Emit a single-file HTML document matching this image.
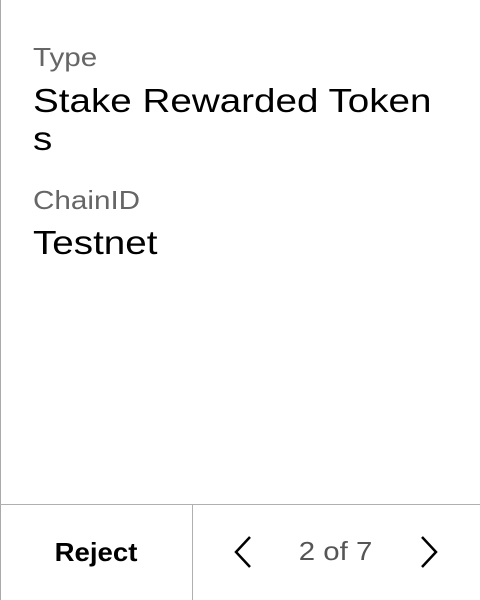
<!DOCTYPE html>
<html><head><meta charset="utf-8"><style>
body{margin:0;width:480px;height:600px;background:#fff;position:relative;overflow:hidden;font-family:"Liberation Sans",sans-serif}
.t{position:absolute;left:33px;white-space:nowrap;line-height:1;transform-origin:0 0}
.l{color:#666;font-size:26px;transform:scaleX(1.14)}
.v{color:#000;font-size:33px;transform:scaleX(1.17)}
</style></head><body>
<div style="position:absolute;left:0;top:0;width:1px;height:600px;background:#aaa"></div>
<div class="t l" style="top:44px">Type</div>
<div class="t v" style="top:84px">Stake Rewarded Token</div>
<div class="t v" style="top:122px">s</div>
<div class="t l" style="top:187px">ChainID</div>
<div class="t v" style="top:226px">Testnet</div>
<div style="position:absolute;left:0;top:504px;width:480px;height:1px;background:#b0b0b0"></div>
<div style="position:absolute;left:192px;top:504px;width:1px;height:96px;background:#b0b0b0"></div>
<div style="position:absolute;left:0;top:505px;width:192px;height:95px;display:flex;align-items:center;justify-content:center;font-weight:bold;font-size:26px;color:#000"><span style="transform:scaleX(1.06);display:inline-block">Reject</span></div>
<svg style="position:absolute;left:230px;top:535px" width="26" height="34"><path d="M20 2 L6 17 L20 32" fill="none" stroke="#000" stroke-width="2.5"/></svg>
<div style="position:absolute;left:290px;top:536px;width:92px;text-align:center;font-size:26px;color:#555;line-height:30px"><span style="transform:scaleX(1.13);display:inline-block">2 of 7</span></div>
<svg style="position:absolute;left:416px;top:535px" width="26" height="34"><path d="M6 2 L20 17 L6 32" fill="none" stroke="#000" stroke-width="2.5"/></svg>
</body></html>
